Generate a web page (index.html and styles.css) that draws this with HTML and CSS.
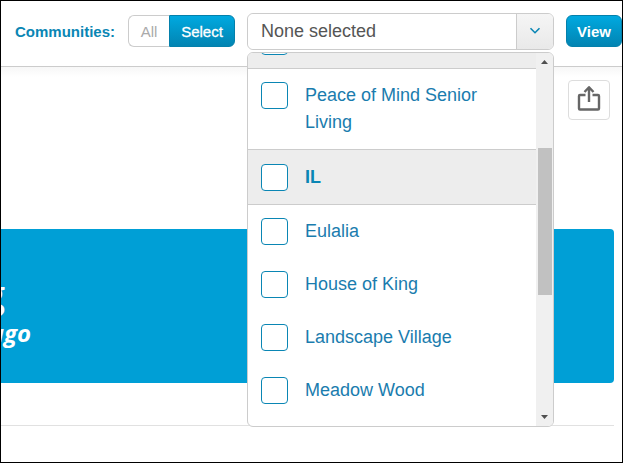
FILE: index.html
```html
<!DOCTYPE html>
<html lang="en">
<head>
<meta charset="utf-8">
<title>Communities</title>
<link rel="stylesheet" href="styles.css">
</head>
<body>
<header class="toolbar">
  <label class="toolbar-label" for="community">Communities:</label>
  <div class="toggle">
    <button type="button" class="toggle-all">All</button>
    <button type="button" class="toggle-select primary">Select</button>
  </div>
  <div class="picker">
    <select id="community" class="picker-select"><option>None selected</option></select>
    <span class="picker-arrow"><svg width="12" height="8" viewBox="0 0 12 8"><path d="M1.500 1.200 6 5.700l4.500-4.500" fill="none" stroke="#0a86b4" stroke-width="1.600"/></svg></span>
    <div class="menu">
      <ul class="options">
        <li class="option group"><input type="checkbox" id="c0" aria-label="Group"></li>
        <li class="option"><input type="checkbox" id="c1"><label for="c1">Peace of Mind Senior Living</label></li>
        <li class="option group"><input type="checkbox" id="c2"><label for="c2">IL</label></li>
        <li class="option"><input type="checkbox" id="c3"><label for="c3">Eulalia</label></li>
        <li class="option"><input type="checkbox" id="c4"><label for="c4">House of King</label></li>
        <li class="option"><input type="checkbox" id="c5"><label for="c5">Landscape Village</label></li>
        <li class="option"><input type="checkbox" id="c6"><label for="c6">Meadow Wood</label></li>
      </ul>
      <div class="scrollbar">
        <svg width="7" height="4" viewBox="0 0 7 4"><path d="M0 4 3.500 0 7 4z" fill="#505050"/></svg>
        <div class="track"><div class="thumb"></div></div>
        <svg width="7" height="4" viewBox="0 0 7 4"><path d="M0 0h7L3.500 4z" fill="#505050"/></svg>
      </div>
    </div>
  </div>
  <button type="button" class="view primary">View</button>
</header>
<main class="page">
  <div class="actions">
    <button type="button" class="share" aria-label="Share"><svg width="24" height="28" viewBox="0 0 24 28"><path d="M8.500 10H3Q2 10 2 11v12.500q0 1 1 1h18q1 0 1-1V11q0-1-1-1h-5.500M12 17V3M7.500 7 12 2.200 16.500 7" fill="none" stroke="#666" stroke-width="2.400" stroke-linejoin="round"/></svg></button>
  </div>
  <section class="banner">
    <div class="banner-text">
      <div class="banner-name">g</div>
      <div class="banner-city">ago</div>
    </div>
  </section>
  <hr class="rule">
</main>
</body>
</html>
```

FILE: styles.css
```css
* { box-sizing: border-box; }

body {
  margin: 0;
  min-height: 100vh;
  border: 1px solid #000;
  background: #fff;
  font-family: "Liberation Sans", Arial, sans-serif;
  overflow: hidden;
}

button { font-family: inherit; cursor: pointer; }

.toolbar {
  display: flex;
  align-items: center;
  height: 66px;
  padding: 0 0 5px 14px;
  border-bottom: 1px solid #ccc;
}

.toolbar-label {
  flex: none;
  margin-right: 13px;
  color: #0a86b4;
  font-size: 15px;
  font-weight: bold;
}

.primary {
  border: 1px solid #0480ab;
  background: linear-gradient(#00a9e0, #0284b2);
  color: #fff;
  font-size: 15px;
  font-weight: bold;
}

.toggle {
  display: flex;
  flex: none;
  height: 32px;
  margin-right: 12px;
}

.toggle-all {
  width: 41px;
  padding: 0;
  border: 1px solid #ccc;
  border-right: 0;
  border-radius: 6px 0 0 6px;
  background: #fff;
  color: #aaa;
  font-size: 15px;
}

.toggle-select {
  width: 66px;
  padding: 0;
  border-radius: 0 6px 6px 0;
  font-weight: normal;
  -webkit-text-stroke: 0.3px #fff;
}

.picker {
  position: relative;
  display: flex;
  flex: 1;
  height: 37px;
  margin-right: 12px;
  border: 1px solid #ccc;
  border-radius: 6px;
}

.picker-select {
  appearance: none;
  flex: 1;
  min-width: 0;
  padding: 0 13px;
  border: 0;
  border-radius: 6px 0 0 6px;
  background: #fff;
  color: #555;
  font-family: inherit;
  font-size: 18px;
}

.picker-arrow {
  display: flex;
  align-items: center;
  justify-content: center;
  width: 37px;
  border-left: 1px solid #ccc;
  border-radius: 0 5px 5px 0;
  background: linear-gradient(#f5f5f5, #e9e9e9);
}

.menu {
  position: absolute;
  z-index: 1;
  top: 38px;
  left: -1px;
  right: -1px;
  display: flex;
  height: 375px;
  overflow: hidden;
  border: 1px solid #ccc;
  border-radius: 6px;
  background: #fff;
}

.options {
  display: flex;
  flex: 1;
  flex-direction: column;
  justify-content: flex-end;
  margin: 0;
  padding: 0 0 9px;
  list-style: none;
}

.option {
  display: flex;
  flex: none;
  gap: 17px;
  padding: 13px;
  color: #1a7cae;
  font-size: 18px;
  line-height: 27px;
}

.option label { flex: 1; padding-right: 30px; }

.option input {
  appearance: none;
  flex: none;
  width: 27px;
  height: 27px;
  margin: 0;
  border: 1px solid #0a86b4;
  border-radius: 4px;
  background: #fff;
}

.group {
  padding-bottom: 13px;
  padding-top: 14px;
  border-top: 1px solid #ccc;
  border-bottom: 1px solid #ccc;
  background: #ededed;
  color: #0a86b4;
  font-weight: bold;
}

.scrollbar {
  display: flex;
  flex-direction: column;
  align-items: center;
  width: 17px;
  padding: 7px 2px;
  background: #f0f0f0;
}

.track { flex: 1; align-self: stretch; padding-top: 84px; }
.thumb { height: 147px; margin-right: -1px; background: #c1c1c1; }

.view {
  flex: none;
  width: 56px;
  height: 32px;
  padding: 0;
  border-radius: 6px;
}

.page {
  padding: 13px 8px 0 0;
  background: linear-gradient(#f7f7f7, #fff 10px);
}

.actions {
  display: flex;
  justify-content: flex-end;
  padding-right: 4px;
  margin-bottom: 109px;
}

.share {
  display: flex;
  align-items: center;
  justify-content: center;
  width: 42px;
  height: 40px;
  padding: 0 0 2px;
  border: 1px solid #ddd;
  border-radius: 4px;
  background: #fff;
}

.banner {
  height: 154px;
  overflow: hidden;
  border-radius: 0 4px 4px 0;
  background: #009fd6;
  color: #fff;
  font-family: "Open Sans", sans-serif;
  font-weight: 600;
}

.banner-text { width: 30px; padding-top: 44px; }

.banner-name,
.banner-city { display: flex; justify-content: flex-end; }

.banner-name { padding-right: 26px; font-size: 38px; line-height: 40px; }
.banner-city { font-size: 24px; font-style: italic; font-weight: bold; line-height: 40px; }

.rule { margin: 42px 0 0; border: 0; border-top: 1px solid #e1e1e1; }
```
